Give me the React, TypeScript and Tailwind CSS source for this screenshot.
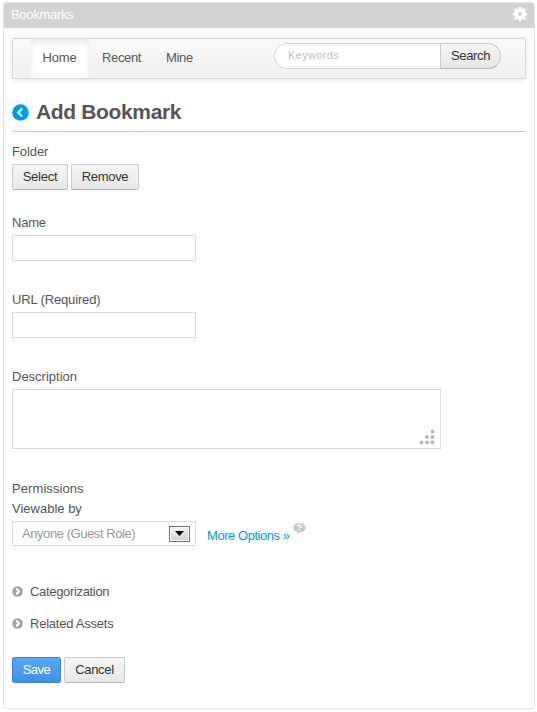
import React from "react";

const button =
  "h-[26px] shrink-0 rounded-[2px] border border-[#c8c9ca] border-b-[#b4b5b6] bg-linear-to-b from-[#f5f5f5] to-[#e8e8e8] text-center text-[#333] leading-[24px]";

function Gear() {
  return (
    <svg width="14" height="14" viewBox="0 0 14 14" fill="none" stroke="#fff" className="-mt-[2px]">
      <circle cx="7" cy="7" r="3.8" strokeWidth="3.4" />
      <path
        d="M7 0v2.5M7 11.5V14M0 7h2.5M11.5 7H14M2 2l1.8 1.8M10.2 10.2L12 12M2 12l1.8-1.8M10.2 3.8L12 2"
        strokeWidth="3"
      />
    </svg>
  );
}

function Toggle({ label, className }: { label: string; className: string }) {
  return (
    <div className={`flex h-5 items-center ${className}`}>
      <svg width="11" height="11" viewBox="0 0 11 11" className="mr-[7px] mb-[2px]">
        <circle cx="5.5" cy="5.5" r="5.3" fill="#a3a3a3" />
        <path d="M4.3 2.7L7 5.5L4.3 8.3" fill="none" stroke="#fff" strokeWidth="2" />
      </svg>
      <span>{label}</span>
    </div>
  );
}

function Field({ label, className = "" }: { label: string; className?: string }) {
  return (
    <label className="mb-[29px] block">
      <span className={`block h-5 ${className}`}>{label}</span>
      <input className="mt-[2px] block h-[26px] w-[184px] border border-[#dbdbdb] bg-white outline-none" />
    </label>
  );
}

export default function App() {
  return (
    <div className="h-[712px] w-[537px] bg-white pt-[2px] pl-[3px] font-['Liberation_Sans',Arial,sans-serif] text-[13px] leading-5 text-[#555]">
      <section className="h-[707px] w-[532px] overflow-hidden rounded-[3px] border border-[#e4e4e4]">
        <header className="-mx-px -mt-px flex h-[26px] items-center justify-between bg-[#d3d3d3] pr-[8px] pl-2 text-white">
          <span className="tracking-[-0.3px]">Bookmarks</span>
          <Gear />
        </header>
        <div className="px-2">
          <nav className="mt-[10px] flex h-[41px] w-[514px] rounded-[1px] border border-[#d8d8d8] bg-linear-to-b from-[#fafafa] to-[#f0f0f0] pl-[17px] leading-[38px] shadow-[0_1px_5px_rgba(0,0,0,0.1)]">
            <a className="w-[59px] bg-white text-center tracking-[-0.2px] shadow-[inset_0_3px_7px_rgba(0,0,0,0.09)]">
              Home
            </a>
            <a className="ml-[13px] w-16 tracking-[-0.35px]">Recent</a>
            <a className="w-[108px] tracking-[-0.35px]">Mine</a>
            <form className="mt-1 flex h-[26px] w-[227px] rounded-full border border-[#d6d6d6] bg-white">
              <input
                placeholder="Keywords"
                className="h-6 min-w-0 flex-1 -translate-y-px pl-[13px] text-[11px] tracking-[0.35px] outline-none placeholder:text-[#bbb]"
              />
              <button
                type="button"
                className="-my-px -mr-px block h-[26px] w-[61px] rounded-r-full border border-[#c8c9ca] border-b-[#b4b5b6] bg-linear-to-b from-[#f5f5f5] to-[#e6e6e6] leading-[22px] tracking-[-0.35px] text-[#333]"
              >
                Search
              </button>
            </form>
          </nav>

          <h1 className="mt-[19px] flex h-[34px] w-[514px] border-b border-[#c8c8c8] text-[21px] leading-7 font-bold tracking-[-0.35px]">
            <svg width="17" height="17" viewBox="0 0 17 17" className="mt-[6px] mr-[7px]">
              <circle cx="8.5" cy="8.5" r="8.3" fill="#009ae5" />
              <path d="M10.2 4.5L6.2 8.5L10.2 12.5" fill="none" stroke="#fff" strokeWidth="2" />
            </svg>
            Add Bookmark
          </h1>

          <div className="mt-[10px] h-[71px]">
            <div className="tracking-[-0.1px]">Folder</div>
            <div className="mt-[2px] flex gap-[3px]">
              <button className={`${button} w-14 tracking-[-0.25px]`}>Select</button>
              <button className={`${button} w-[68px] tracking-[-0.3px]`}>Remove</button>
            </div>
          </div>
          <Field label="Name" className="tracking-[-0.2px]" />
          <Field label="URL (Required)" className="tracking-[-0.15px]" />
          <label className="block h-[112px]">
            <span className="block h-5">Description</span>
            <div className="mt-[2px] flex h-[60px] w-[429px] items-end justify-end border border-[#dbdbdb] pr-[5px] pb-[3px]">
              <svg width="16" height="16" viewBox="0 0 16 16" fill="#b8b8b8">
                <circle cx="13.5" cy="2.5" r="1.9" />
                <circle cx="8" cy="8" r="1.9" />
                <circle cx="13.5" cy="8" r="1.9" />
                <circle cx="2.5" cy="13.5" r="1.9" />
                <circle cx="8" cy="13.5" r="1.9" />
                <circle cx="13.5" cy="13.5" r="1.9" />
              </svg>
            </div>
          </label>

          <div className="tracking-[0.08px]">Permissions</div>
          <div>Viewable by</div>
          <div className="mt-[2px] flex h-[25px]">
            <div className="flex w-[184px] items-center justify-between rounded-[1px] border border-[#dbdbdb] pr-[5px] pl-[9px] text-[#999]">
              <span className="tracking-[-0.43px]">Anyone (Guest Role)</span>
              <span className="flex h-4 w-[21px] items-center justify-center border border-[#707070] bg-linear-to-b from-[#f5f5f5] to-[#d0d0d0] shadow-[inset_0_0_0_1px_white]">
                <svg width="9" height="5" viewBox="0 0 9 5">
                  <path d="M0 0h9L4.5 5z" fill="#000" />
                </svg>
              </span>
            </div>
            <a className="mt-[5px] ml-[11px] w-[83px] tracking-[-0.45px] whitespace-nowrap text-[#009ae5]">
              More Options »
            </a>
            <svg width="13" height="11" viewBox="0 0 13 11" className="mt-[2px] ml-[3px]">
              <ellipse cx="6.5" cy="4.8" rx="6.3" ry="4.7" fill="#c8c8c8" />
              <path d="M4 7.5h5L5.5 11z" fill="#c8c8c8" />
              <path d="M5 3.5C5 1.5 8 1.5 8 3.2C8 4.3 6.5 4.2 6.5 5.5M6.5 6.3v1.2" fill="none" stroke="#fff" strokeWidth="1.2" />
            </svg>
          </div>

          <Toggle className="mt-9 tracking-[-0.33px]" label="Categorization" />
          <Toggle className="mt-3 tracking-[-0.23px]" label="Related Assets" />
          <div className="mt-[23px] flex gap-[3px]">
            <button className="h-[26px] w-[49px] rounded-[2px] border border-[#3e86d5] bg-linear-to-b from-[#55a8fa] to-[#4290e6] leading-[24px] tracking-[-0.5px] text-white">
              Save
            </button>
            <button className={`${button} w-[61px] tracking-[-0.3px]`}>Cancel</button>
          </div>
        </div>
      </section>
    </div>
  );
}
